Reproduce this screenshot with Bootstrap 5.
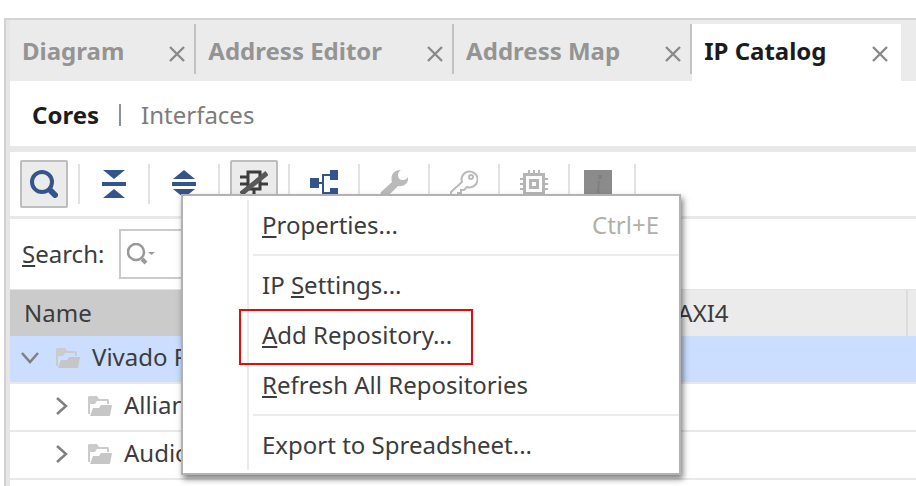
<!DOCTYPE html>
<html lang="en">
<head>
<meta charset="utf-8">
<meta name="viewport" content="width=device-width, initial-scale=1">
<title>IP Catalog</title>
<link href="https://cdn.jsdelivr.net/npm/bootstrap@5.3.0/dist/css/bootstrap.min.css" rel="stylesheet">
<style>
  body { font-family: "Noto Sans", sans-serif; font-size: 24px; line-height: 32px; color: #3c3c3c; background: #fff; }
  button, input { font: inherit; color: inherit; }
  .workspace { min-height: 100vh; padding: 18px 0 0 4px; }
  .panel { min-height: calc(100vh - 18px); border-top: 2px solid #d4d4d4; border-left: 2px solid #d2d2d2; background: #fff; }
  .panel-inner { border-left: 4px solid #e6e6e6; min-height: calc(100vh - 20px); }
  .tab-strip { background: #ebebeb; padding-top: 4px; }
  .view-tab { padding: 0 9px 4px 12px; height: 57px; color: #949494; font-weight: 700; }
  .view-tab button, .mode-switch button, .tool, .menu-entry, .twisty { border: 0; background: none; padding: 0; }
  .view-tab .tab-name { margin-right: 45px; }
  .view-tab .closer { display: flex; padding-top: 6px; color: #8a8a8a; }
  .tab-rule { width: 2px; height: 50px; background: #c2c2c2; }
  .view-tab.current { background: #fff; color: #1c1c1c; padding-right: 13px; }
  .mode-switch { height: 65px; padding: 2px 22px 0; gap: 20px; color: #7c7c7c; }
  .mode-switch .current { font-weight: 700; color: #1c1c1c; }
  .mode-rule { width: 2px; height: 22px; background: #8b9499; }
  .tools { height: 73px; border-top: 6px solid #e8e8e8; border-bottom: 3px solid #e8e8e8; padding: 0 10px; gap: 10px; }
  .tool { width: 48px; height: 48px; display: flex; align-items: center; justify-content: center; flex: none; }
  .tool.narrow { width: 44px; padding-right: 8px; }
  .tool.pressed { background: #ebebeb; border: 2px solid #bdbdbd; border-radius: 2px; }
  .tool-rule { width: 2px; height: 40px; background: #e2e2e2; flex: none; }
  .find { height: 71px; padding: 0 12px; gap: 15px; border-bottom: 1px solid #e4e4e4; }
  .find-box { border: 2px solid #cbcbcb; height: 50px; padding-left: 6px; gap: 6px; width: 60%; }
  .find-box input { border: 0; outline: 0; min-width: 0; }
  .catalog { table-layout: fixed; width: 100%; margin: 0; }
  .catalog th { background: #ebebeb; height: 46px; padding: 0 14px; font-weight: 400; border-right: 2px solid #dcdcdc; }
  .catalog th.sorted { background: #cbcbcb; }
  .catalog th:last-child { border-right: 0; }
  .catalog td { height: 48px; padding: 0 0 4px; border-bottom: 2px solid #e8e8e8; }
  .catalog .chosen td { background: #cbdeff; height: 47px; }
  .col-name { width: 72%; } .col-axi { width: 27%; }
  .twisty { width: 20px; display: flex; justify-content: center; margin: 2px 16px 0 0; }
  .twig { padding-left: 10px; } .twig.deep { padding-left: 42px; }
  .twig .folder { margin: 2px 12px 0 0; }
  .popup { position: absolute; top: 194px; left: 181px; width: 500px; background: #fff; border: 2px solid #b2b2b2; padding: 4px 0 3px; box-shadow: 2px 4px 6px rgba(0,0,0,.5); }
  .popup-body { border-left: 2px solid #ebebeb; margin-left: 64px; }
  .menu-entry { height: 50px; padding: 0 20px 0 13px; width: 100%; display: flex; align-items: center; justify-content: space-between; text-align: left; position: relative; }
  .keys { color: #b0b0a8; }
  .divide { height: 2px; margin: 4px 0 4px 4px; background: #ebebeb; }
  .callout { position: absolute; left: -10px; top: -1px; width: 234px; height: 56px; border: 2px solid #f00; }
  u { text-decoration-thickness: 2px; text-underline-offset: 2px; text-decoration-skip-ink: none; }
  svg { display: block; flex: none; }
</style>
<script src="https://cdn.jsdelivr.net/npm/bootstrap@5.3.0/dist/js/bootstrap.bundle.min.js"></script>
</head>
<body class="overflow-hidden">
<svg class="d-none" aria-hidden="true">
  <symbol id="cross" viewBox="0 0 16 16"><path d="M1 1 15 15M15 1 1 15" fill="none" stroke="currentColor" stroke-width="2.4"/></symbol>
  <symbol id="folder" viewBox="0 0 24 20"><path d="M0 18V1l1-1h8l2 3h9l1 1v4h-2V5H9L7 8H2v10z" fill="#cbcbcb"/><path d="M2 20l3-8h6l2-3h11l-2 11z" fill="#c6c6c6"/></symbol>
  <symbol id="right" viewBox="0 0 12 18"><path d="m1 1 9 8-9 8" fill="none" stroke="#808080" stroke-width="2.5"/></symbol>
</svg>
<main class="workspace position-relative">
  <div class="panel"><div class="panel-inner">
    <nav class="tab-strip d-flex" aria-label="Views">
      <div class="view-tab d-flex align-items-center"><button class="tab-name" type="button">Diagram</button><button class="closer" type="button" aria-label="Close Diagram"><svg width="16" height="16"><use href="#cross"/></svg></button></div><span class="tab-rule"></span>
      <div class="view-tab d-flex align-items-center"><button class="tab-name" type="button">Address Editor</button><button class="closer" type="button" aria-label="Close Address Editor"><svg width="16" height="16"><use href="#cross"/></svg></button></div><span class="tab-rule"></span>
      <div class="view-tab d-flex align-items-center"><button class="tab-name" type="button">Address Map</button><button class="closer" type="button" aria-label="Close Address Map"><svg width="16" height="16"><use href="#cross"/></svg></button></div><span class="tab-rule"></span>
      <div class="view-tab current d-flex align-items-center"><button class="tab-name" type="button">IP Catalog</button><button class="closer" type="button" aria-label="Close IP Catalog"><svg width="16" height="16"><use href="#cross"/></svg></button></div>
    </nav>
    <div class="mode-switch d-flex align-items-center">
      <button type="button" class="current">Cores</button><span class="mode-rule"></span><button type="button">Interfaces</button>
    </div>
    <div class="tools d-flex align-items-center" role="toolbar" aria-label="Catalog tools">
      <button class="tool pressed" type="button" aria-label="Search"><svg width="28" height="28" fill="none" stroke="#34548c"><circle cx="12" cy="12" r="10" stroke-width="4"/><path d="m21 21 4 4" stroke-width="6" stroke-linecap="round"/></svg></button><span class="tool-rule"></span>
      <button class="tool" type="button" aria-label="Collapse all"><svg width="24" height="28" fill="#34548c"><path d="M1 0h22L12 9zM0 12h24v4H0zM1 28h22L12 19z"/></svg></button><span class="tool-rule"></span>
      <button class="tool" type="button" aria-label="Expand all"><svg width="24" height="28" fill="#34548c"><path d="M1 9h22L12 0zM0 12h24v4H0zM1 19h22L12 28z"/></svg></button><span class="tool-rule"></span>
      <button class="tool pressed" type="button" aria-label="Hide incompatible"><svg width="28" height="28" fill="none"><path d="M8 2h12v17H8zM0 7h8M0 14h8M20 14h8M14 19v8" stroke="#3c3c3c" stroke-width="3"/><path d="M1 24 27 3" stroke="#585858" stroke-width="5"/></svg></button><span class="tool-rule"></span>
      <button class="tool" type="button" aria-label="Group by category"><svg width="28" height="28"><path d="M0 8h9v10H0zM20 0h8v10h-8zM20 18h8v10h-8z" fill="#34548c"/><path d="M9 13h4M20 5h-7v18h7" fill="none" stroke="#34548c" stroke-width="2"/></svg></button><span class="tool-rule"></span>
      <button class="tool" type="button" aria-label="Customize"><svg width="28" height="28" fill="#bababa"><path d="M21 0c-2 1-3 3-3 5 0 3 2 5 5 5 2 0 4-1 5-3 1 6-4 10-10 9L7 27c-3 2-8-2-6-5l11-10C10 5 14 0 21 0z"/></svg></button><span class="tool-rule"></span>
      <button class="tool" type="button" aria-label="License"><svg width="28" height="28" fill="none" stroke="#bababa" stroke-width="2"><path d="M12 12a8 8 0 1 1 5 5l-3 3h-3v3H8v3H1v-4z"/><circle cx="21" cy="7" r="2"/></svg></button><span class="tool-rule"></span>
      <button class="tool" type="button" aria-label="Compatible families"><svg width="28" height="28" fill="none" stroke="#b5b5b5"><path d="M4.500 4.500h19v19h-19z" stroke-width="3"/><path d="M10.500 10.500h7v7h-7z" stroke-width="3"/><path d="M9 0v4M14 0v4M19 0v4M9 24v4M14 24v4M19 24v4M0 9h4M0 14h4M0 19h4M24 9h4M24 14h4M24 19h4" stroke-width="2"/></svg></button><span class="tool-rule"></span>
      <button class="tool narrow" type="button" aria-label="Information"><svg width="28" height="28"><path d="M0 0h28v28H0z" fill="#8b8b8b"/><path d="M15 6h2v2h-2zM13 12h2l-1 10h2" fill="none" stroke="#808080" stroke-width="2"/></svg></button><span class="tool-rule"></span>
    </div>
    <div class="find d-flex align-items-center">
      <label for="term"><u>S</u>earch:</label>
      <div class="find-box d-flex align-items-center"><svg width="28" height="22" fill="none" stroke="#999"><circle cx="9" cy="9" r="8" stroke-width="2.500"/><path d="m15 16 4 4" stroke-width="4"/><path d="M21 9h7l-3.500 3z" fill="#999" stroke="none"/></svg><input id="term" class="flex-grow-1" type="text"></div>
    </div>
    <table class="catalog">
      <colgroup><col class="col-name"><col class="col-axi"><col></colgroup>
      <thead><tr><th class="sorted" scope="col">Name</th><th scope="col">AXI4</th><th></th></tr></thead>
      <tbody>
        <tr class="chosen"><td><div class="twig d-flex align-items-center"><button class="twisty" type="button" aria-label="Collapse"><svg width="18" height="12"><path d="m1 1 8 9 8-9" fill="none" stroke="#808080" stroke-width="2.500"/></svg></button><svg class="folder" width="24" height="20"><use href="#folder"/></svg>Vivado Repo</div></td><td></td><td></td></tr>
        <tr><td><div class="twig deep d-flex align-items-center"><button class="twisty" type="button" aria-label="Expand"><svg width="12" height="18"><use href="#right"/></svg></button><svg class="folder" width="24" height="20"><use href="#folder"/></svg>Alliance</div></td><td></td><td></td></tr>
        <tr><td><div class="twig deep d-flex align-items-center"><button class="twisty" type="button" aria-label="Expand"><svg width="12" height="18"><use href="#right"/></svg></button><svg class="folder" width="24" height="20"><use href="#folder"/></svg>Audio</div></td><td></td><td></td></tr>
      </tbody>
    </table>
  </div></div>
  <div class="popup"><div class="popup-body">
    <button class="menu-entry" type="button"><span><u>P</u>roperties...</span><span class="keys">Ctrl+E</span></button>
    <div class="divide"></div>
    <button class="menu-entry" type="button"><span>IP <u>S</u>ettings...</span></button>
    <button class="menu-entry" type="button"><span><u>A</u>dd Repository...</span><span class="callout"></span></button>
    <button class="menu-entry" type="button"><span><u>R</u>efresh All Repositories</span></button>
    <div class="divide"></div>
    <button class="menu-entry" type="button"><span>Export to Spreadsheet...</span></button>
  </div></div>
</main>
</body>
</html>
